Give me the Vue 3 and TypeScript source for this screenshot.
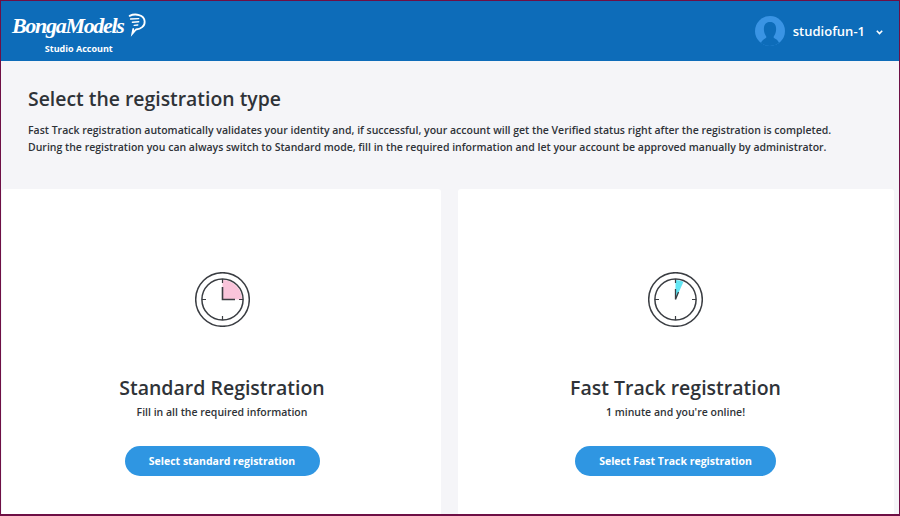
<script setup lang="ts">
interface Card {
  title: string
  sub: string
  cta: string
  fill: string
  wide: number
}
const cards: Card[] = [
  {
    title: 'Standard Registration',
    sub: 'Fill in all the required information',
    cta: 'Select standard registration',
    fill: 'M27.5 8 A19.5 19.5 0 0 1 47 27.5 L27.5 27.5 Z',
    wide: 195,
  },
  {
    title: 'Fast Track registration',
    sub: "1 minute and you're online!",
    cta: 'Select Fast Track registration',
    fill: 'M27.5 8 A19.5 19.5 0 0 1 35.5 9.7 L27.5 27.5 Z',
    wide: 201,
  },
]
</script>

<template>
  <div class="frame">
    <header class="top">
      <div class="brand">
        <div class="logo-row">
          <span class="logo">BongaModels</span>
          <svg class="bubble" width="20" height="25" viewBox="0 0 22 26" fill="none" stroke="#fff" stroke-width="2" stroke-linecap="round">
            <path d="M4 3.5 C10 0.5 20 2 20.5 9.5 C21 15 16 18 11 18.5 L7 23 L8 18" />
            <path d="M5 7 L14 6.5 M7 10.5 L14 10 M9 14 L13 13.5" stroke-width="1.5" />
          </svg>
        </div>
        <div class="account">Studio Account</div>
      </div>
      <div class="user">
        <svg class="avatar" width="30" height="30" viewBox="0 0 30 30">
          <circle cx="15" cy="15" r="15" fill="#3a94e4" />
          <path d="M6 27 C7 23 11 23 11.5 21 C9.5 18 8.5 15 9 11.5 C9.5 7.5 12 6 15 6 C18 6 20.5 7.5 21 11.5 C21.5 15 20.5 18 18.5 21 C19 23 23 23 24 27 A15 15 0 0 1 6 27 Z" fill="#0d6cb9" />
        </svg>
        <span class="name">studiofun-1</span>
        <svg class="chev" width="7" height="5" viewBox="0 0 7 5" fill="none" stroke="#fff" stroke-width="1.6">
          <path d="M0.8 0.8 L3.5 3.5 L6.2 0.8" />
        </svg>
      </div>
    </header>

    <section class="intro">
      <h1>Select the registration type</h1>
      <p>Fast Track registration automatically validates your identity and, if successful, your account will get the Verified status right after the registration is completed.<br />During the registration you can always switch to Standard mode, fill in the required information and let your account be approved manually by administrator.</p>
    </section>

    <main class="cards">
      <article v-for="c in cards" :key="c.title" class="card">
        <svg class="clock" width="55" height="55" viewBox="0 0 55 55" fill="none" stroke="#3a3d42">
          <path :d="c.fill" :class="c.wide === 195 ? 'pink' : 'cyan'" stroke="none" />
          <circle cx="27.5" cy="27.5" r="26.8" stroke-width="1.5" />
          <circle cx="27.5" cy="27.5" r="20.6" stroke-width="1.5" />
          <path d="M27.5 7 V11 M27.5 44 V48 M7 27.5 H11 M44 27.5 H48" stroke-width="1.2" />
          <path v-if="c.wide === 195" d="M27.5 15 V27.5 H40" stroke-width="1.6" />
          <path v-else d="M27.5 27.5 V17 M27.5 27.5 L30.5 20" stroke-width="1.3" />
        </svg>
        <h2>{{ c.title }}</h2>
        <p class="sub">{{ c.sub }}</p>
        <button class="cta" type="button" :style="{ width: c.wide + 'px' }">{{ c.cta }}</button>
      </article>
    </main>
  </div>
</template>

<style>
html, body { margin: 0; padding: 0; }
</style>

<style scoped>
.frame {
  width: 900px;
  height: 516px;
  box-sizing: border-box;
  border: 1px solid #6e0f45;
  border-bottom-width: 2px;
  background: #f5f5f8;
  overflow: hidden;
  font-family: "Open Sans", "Noto Sans", sans-serif;
  color: #2f3338;
}
.top {
  height: 60px;
  background: #0d6cb9;
  display: flex;
  justify-content: space-between;
  align-items: center;
  padding: 0 16px 0 11px;
  color: #fff;
}
.brand { display: flex; flex-direction: column; align-items: center; }
.logo-row { display: flex; align-items: center; gap: 2px; height: 36px; }
.logo {
  font-family: "Liberation Serif", serif;
  font-style: italic;
  font-weight: 700;
  font-size: 22px;
  letter-spacing: -1.3px;
  line-height: 30px;
}
.bubble { margin-top: -3px; }
.account { font-size: 9px; font-weight: 700; line-height: 12px; margin-top: -1px; }
.user { display: flex; align-items: center; }
.avatar { margin-right: 8px; }
.name { font-size: 13px; font-weight: 600; margin-right: 11px; }
.chev { margin-top: 2px; }
.intro { height: 128px; box-sizing: border-box; padding: 25px 27px 0; }
h1 { margin: 0; font-size: 19.4px; font-weight: 600; line-height: 26px; color: #2f3338; }
.intro p { margin: 10px 0 0; font-size: 10.5px; font-weight: 600; line-height: 17px; white-space: nowrap; }
.cards { display: flex; gap: 17px; padding: 0 5px 0 1px; }
.card {
  height: 328px;
  box-sizing: border-box;
  background: #fff;
  display: flex;
  flex-direction: column;
  align-items: center;
  border-radius: 3px;
}
.card:first-child { width: 439px; padding-left: 1px; }
.card:last-child { width: 436px; padding-right: 1px; }
.clock { margin-top: 83px; }
.pink { fill: #f9c4da; }
.cyan { fill: #62e6f4; }
h2 { margin: 47px 0 0; font-size: 19.5px; font-weight: 600; line-height: 28px; color: #2f3338; }
.sub { margin: 2px 0 0; font-size: 10.5px; font-weight: 600; line-height: 16px; }
.cta {
  margin-top: 26px;
  height: 30px;
  border: 0;
  border-radius: 15px;
  background: #2f96e2;
  color: #fff;
  font-family: inherit;
  font-size: 10.5px;
  font-weight: 700;
  padding: 0;
}
</style>
